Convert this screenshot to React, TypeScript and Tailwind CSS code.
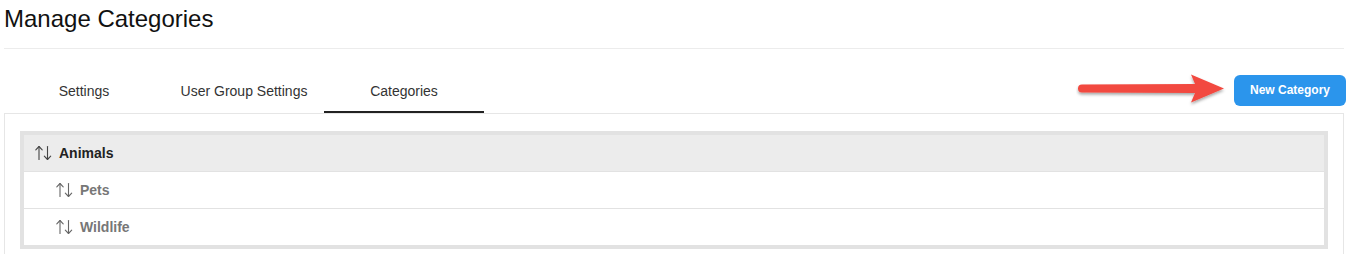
import React from "react";

const SortIcon = ({ className }: { className?: string }) => (
  <svg viewBox="0 0 17 16" className={className} fill="none" stroke="currentColor" strokeWidth={1.1} strokeLinecap="round" strokeLinejoin="round">
    <path d="M4 1.5V14.5" />
    <path d="M0.8 4.8L4 1.5L7.2 4.8" />
    <path d="M12.5 1.5V14.5" />
    <path d="M9.3 11.2L12.5 14.5L15.7 11.2" />
  </svg>
);

const RedArrow = () => (
  <svg width="152" height="36" viewBox="0 0 152 36" className="shrink-0">
    <defs>
      <filter id="arrowShadow" x="-10%" y="-40%" width="120%" height="200%">
        <feDropShadow dx="0" dy="2" stdDeviation="1.6" floodColor="#000" floodOpacity="0.35" />
      </filter>
    </defs>
    <path
      d="M6 12.5 L119 12 L115 2.5 L148 16.5 L115 30.5 L119 21 L6 20.5 A4 4 0 0 1 6 12.5 Z"
      fill="#f2493f"
      filter="url(#arrowShadow)"
    />
  </svg>
);

const tabs = ["Settings", "User Group Settings", "Categories"];

const rows = [
  { name: "Animals", parent: true },
  { name: "Pets", parent: false },
  { name: "Wildlife", parent: false },
];

export default function App() {
  return (
    <div className="w-full h-screen bg-white pl-1 pr-[3px] pt-[5px] font-['Liberation_Sans',Arial,sans-serif] overflow-hidden">
      <h1 className="text-[24px] leading-[28px] text-[#111] font-normal">Manage Categories</h1>
      <div className="mt-[15px] h-px bg-[#ececec]" />

      <div className="mt-[21px] flex items-center justify-between h-[43px]">
        <div className="flex h-full">
          {tabs.map((t) => {
            const active = t === "Categories";
            return (
              <div
                key={t}
                className={
                  "w-[160px] h-full flex items-center justify-center text-[14px] text-[#333] " +
                  (active ? "border-b-2 border-[#222] pt-[2px]" : "pt-0")
                }
              >
                {t}
              </div>
            );
          })}
        </div>
        <div className="flex items-center gap-[6px] -mt-[3px] -mr-[2px]">
          <RedArrow />
          <button className="w-[112px] h-[31px] rounded-[6px] bg-[#2b95ec] text-white text-[12px] font-bold">
            New Category
          </button>
        </div>
      </div>

      <div className="border border-[#e6e6e6] pt-[17px] pl-[15px] pr-[15px] pb-6">
        <div className="border-4 border-[#e2e2e2]">
          {rows.map((r) => (
            <div
              key={r.name}
              className={
                "flex items-center gap-[7px] " +
                (r.parent
                  ? "h-[36px] bg-[#ececec] pl-[11px] text-[#222]"
                  : "h-[37px] bg-white pl-[32px] text-[#777] border-t border-[#e2e2e2]")
              }
            >
              <SortIcon className={"w-[17px] h-[16px] " + (r.parent ? "text-[#444]" : "text-[#666]")} />
              <span className="text-[14px] font-bold">{r.name}</span>
            </div>
          ))}
        </div>
      </div>
    </div>
  );
}
